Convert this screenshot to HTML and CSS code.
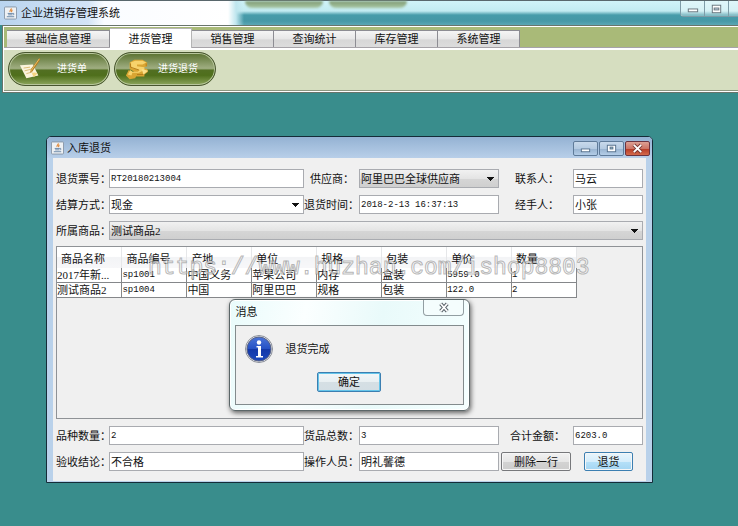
FILE: index.html
```html
<!DOCTYPE html>
<html lang="zh-CN">
<head>
<meta charset="utf-8">
<title>企业进销存管理系统</title>
<link rel="stylesheet" href="styles.css">
</head>
<body>
<svg class="defs" aria-hidden="true">
  <symbol id="java" viewBox="0 0 14 14">
    <rect x="0.5" y="0.5" width="13" height="13" rx="1" fill="#eef1f4" stroke="#8795a5"/>
    <path d="M7.600 2c1 1.300-2 2-1 3.800M9 3.600C8 4.400 8 5 8.200 6" fill="none" stroke="#e08a3c" stroke-width="1.300"/>
    <path d="M4 7.500h5.500M4.500 9h4.500M3 11h8M9.500 7.500c2-.3 1.600 1.300 0 1.600" fill="none" stroke="#6785a6"/>
  </symbol>
</svg>
<header class="titlebar">
  <svg class="java"><use href="#java"/></svg>
  <h1>企业进销存管理系统</h1>
  <span class="blob blob-a"></span><span class="blob blob-b"></span>
  <div class="sysbtns">
    <button aria-label="最小化"><svg viewBox="0 0 24 16"><rect x="7.500" y="8.500" width="10" height="3" fill="#fff" stroke="#66747c"/></svg></button>
    <button aria-label="还原"><svg viewBox="0 0 24 16"><rect x="7.500" y="4.500" width="9" height="8" fill="#fff" stroke="#66747c"/><rect x="9.500" y="7.500" width="5" height="2" fill="#cde" stroke="#66747c"/></svg></button>
    <button aria-label="关闭"></button>
  </div>
</header>
<div class="shell">
  <nav class="tabs">
    <button>基础信息管理</button><button class="on">进货管理</button><button>销售管理</button><button>查询统计</button><button>库存管理</button><button>系统管理</button>
  </nav>
  <div class="toolbar">
    <button><svg viewBox="0 0 26 24"><path d="M1 8l14-1 6 12-13 3z" fill="#fbf4dc"/><path d="M5 11l7-1M6 14l8-2M8 17l7-2" stroke="#d9b871"/><path d="M22 0l1 2-8 12-3 2 1-4z" fill="#b37a20"/><path d="M22 1l-9 13" stroke="#eec36a"/><path d="M14 17c2-2 4-1 6 0l-4 4z" fill="#f3d482"/></svg><span>进货单</span></button>
    <button><svg viewBox="0 0 26 24"><path d="M5 5l5-3h9l5 3v4l-5 2 5 1 1 3-4 3v2h-9l-1 2-6 1-4-4 3-6 4 2h2l-5-3z" fill="#d9a532"/><path d="M6 5l5-2h8l4 2-4 2h-6v2l8 1v3l-6 3H8l-1 3-4-1 3-5 2 2h6l2-2-9-2z" fill="#f7d36c"/><path d="M6 6v4l9 3M23 6v3M13 18h7" fill="none" stroke="#b27b19"/><path d="M18 12l7 2-5 4z" fill="#fbe08a"/></svg><span>进货退货</span></button>
  </div>
</div>
<main class="desktop">
  <section class="frame">
    <header class="frame-title">
      <svg class="java"><use href="#java"/></svg>
      <h2>入库退货</h2>
      <div class="frame-btns">
        <button aria-label="最小化"><svg viewBox="0 0 24 14"><rect x="7.500" y="7.500" width="9" height="3" fill="#fff" stroke="#56708c"/></svg></button>
        <button aria-label="最大化"><svg viewBox="0 0 24 14"><rect x="7.500" y="3.500" width="9" height="7" fill="#fff" stroke="#56708c"/><rect x="10.500" y="5.500" width="3" height="2" fill="#9bb" stroke="#56708c"/></svg></button>
        <button class="close" aria-label="关闭"><svg viewBox="0 0 24 14"><path d="M8 3l8 8M16 3l-8 8" stroke="#7a3a35" stroke-width="4"/><path d="M8 3l8 8M16 3l-8 8" stroke="#fff" stroke-width="2"/></svg></button>
      </div>
    </header>
    <form class="form">
      <div class="grid">
        <label for="no">退货票号：</label><input id="no" class="num" value="RT20180213004">
        <label class="in" for="sup">供应商：</label><select id="sup"><option>阿里巴巴全球供应商</option></select>
        <label class="far" for="contact">联系人：</label><input id="contact" value="马云">
        <label for="pay">结算方式：</label><select id="pay" class="white"><option>现金</option></select>
        <label for="time">退货时间：</label><input id="time" class="num" value="2018-2-13 16:37:13">
        <label class="far" for="agent">经手人：</label><input id="agent" value="小张">
        <label for="goods">所属商品：</label><select id="goods" class="wide"><option>测试商品2</option></select>
      </div>
      <div class="scroll">
        <table>
          <thead><tr><th>商品名称</th><th>商品编号</th><th>产地</th><th>单位</th><th>规格</th><th>包装</th><th>单价</th><th>数量</th></tr></thead>
          <tbody>
            <tr><td>2017年新...</td><td class="num">sp1001</td><td>中国义务</td><td>苹果公司</td><td>内存</td><td>盒装</td><td class="num">5959.0</td><td class="num">1</td></tr>
            <tr><td>测试商品2</td><td class="num">sp1004</td><td>中国</td><td>阿里巴巴</td><td>规格</td><td>包装</td><td class="num">122.0</td><td class="num">2</td></tr>
          </tbody>
        </table>
      </div>
      <div class="grid">
        <label for="kinds">品种数量：</label><input id="kinds" class="num" value="2">
        <label for="total">货品总数：</label><input id="total" class="num" value="3">
        <label class="sum" for="sum">合计金额：</label><input id="sum" class="num" value="6203.0">
        <label for="result">验收结论：</label><input id="result" value="不合格">
        <label for="oper">操作人员：</label><input id="oper" value="明礼馨德">
        <div class="actions"><button type="button" class="btn">删除一行</button><button type="button" class="btn go">退货</button></div>
      </div>
    </form>
    <div class="watermark">https://www.huzhan.com/ishop8803</div>
    <div class="dialog" role="dialog" aria-labelledby="msg">
      <header><h3 id="msg">消息</h3><button aria-label="关闭"><svg viewBox="0 0 40 16"><path d="M17 4l7 8M24 4l-7 8" stroke="#59636a" stroke-width="4"/><path d="M17 4l7 8M24 4l-7 8" stroke="#fff" stroke-width="2"/></svg></button></header>
      <div class="dialog-body">
        <div class="message">
          <svg viewBox="0 0 28 28"><defs><linearGradient id="blue" x2="0" y2="1"><stop stop-color="#4a74d8"/><stop offset=".5" stop-color="#2450c4"/><stop offset=".52" stop-color="#1338a8"/><stop offset="1" stop-color="#1c49bd"/></linearGradient></defs><circle cx="14" cy="14" r="13.500" fill="#e4e6ea" stroke="#8b8f98"/><circle cx="14" cy="14" r="12" fill="url(#blue)" stroke="#566187"/><circle cx="14" cy="7.500" r="2.200" fill="#fff"/><path d="M11.500 11h4.500v10h2v1.500h-7V21h2v-8.500h-1.500z" fill="#fff"/></svg>
          <p>退货完成</p>
        </div>
        <button class="btn ok">确定</button>
      </div>
    </div>
  </section>
</main>
</body>
</html>
```
FILE: styles.css
```css
* { box-sizing: border-box; }
body {
  margin: 0;
  min-height: 100vh;
  display: flex;
  flex-direction: column;
  background: #398d8c;
  color: #111;
  font: 11px/14px "Liberation Serif", "Noto Sans CJK SC", sans-serif;
}
button, input, select { font: inherit; color: inherit; margin: 0; }
h1, h2, h3, p { margin: 0; font-size: 11px; font-weight: normal; }
.defs { display: none; }
.java { width: 13px; height: 14px; }

.titlebar {
  position: relative;
  height: 25px;
  display: flex;
  align-items: center;
  gap: 4px;
  padding-left: 4px;
  border-top: 1px solid #59676c;
  background:
    linear-gradient(90deg, #b9d4ef, #d3e4f6 88px, #fafcff 104px, #fff 228px, #bfe6ee 236px, transparent 244px),
    linear-gradient(#d0f3f8, #c2ebf1 10px, #479caa 14px, #4698a6 20px, #5aa7b4);
}
.blob {
  position: absolute;
  top: 0;
  width: 78px;
  height: 7px;
  border-radius: 0 0 30px 30px;
  background: linear-gradient(#7f9a72, #a9c8a6);
  filter: blur(1px);
}
.blob-a { left: 245px; }
.blob-b { left: 329px; }
.sysbtns {
  display: flex;
  align-self: flex-start;
  margin-left: auto;
  height: 16px;
  border: 1px solid #7e9ca7;
  border-width: 0 0 1px 1px;
  border-radius: 0 0 0 4px;
}
.sysbtns button { width: 24px; padding: 0; border: 0; border-right: 1px solid #7e9ca7; background: #ffffff55; }
.sysbtns button:last-child { width: 9px; border: 0; }
.sysbtns svg, .frame-btns svg { display: block; width: 100%; height: 100%; }

.shell {
  border: solid #69756b;
  border-width: 1px 0 1px 1px;
  margin-left: 2px;
  padding: 1px 0 1px 1px;
  background: #fff;
}
.tabs {
  display: flex;
  align-items: flex-end;
  height: 21px;
  padding-left: 3px;
  background: #a9ba78;
  border-bottom: 1px solid #a6a3a8;
}
.tabs button {
  min-width: 82px;
  height: 17px;
  padding: 0 18px;
  line-height: 16px;
  border: 1px solid #8d8d93;
  border-width: 1px 1px 0 0;
  background: linear-gradient(#f5f5f5, #e7e7e7 50%, #d7d7d7 55%, #dcdcdc);
}
.tabs .on { position: relative; height: 20px; margin-bottom: -1px; line-height: 18px; background: #fff; border-color: #b5b5b5; }
.toolbar {
  display: flex;
  gap: 4px;
  margin-top: 2px;
  padding: 2px 4px 4px;
  background: #d6dec0;
  border-bottom: 1px solid #8c9780;
}
.toolbar button {
  display: flex;
  align-items: center;
  width: 102px;
  height: 34px;
  padding: 0 8px 0 10px;
  border: 1px solid #48562f;
  border-radius: 17px;
  box-shadow: inset 0 0 0 1px #b7c59b;
  background: linear-gradient(#59712f, #a0ae82 48%, #526f22 54%, #4f6f1c 70%, #8da65c);
  color: #fff;
  font-size: 10px;
}
.toolbar svg { width: 24px; height: 24px; }
.toolbar span { flex: 1; text-align: center; }

.desktop { flex: 1; margin-left: 2px; padding: 43px 85px 42px 44px; background: #398d8c; }
.frame {
  position: relative;
  border: 1px solid #152c38;
  border-radius: 5px 5px 0 0;
  background: #b9d1ea;
  box-shadow: inset 0 1px #dceaf8;
  padding: 0 6px 1px;
}
.frame-title { display: flex; align-items: center; gap: 3px; height: 21px; margin: 0 -6px; padding: 0 2px 0 4px; border-radius: 4px 4px 0 0; background: linear-gradient(#94b2d3, #b8cfe9); }
.frame-btns { display: flex; align-self: flex-end; gap: 1px; margin: 0 0 2px auto; }
.frame-btns button { width: 25px; height: 15px; padding: 0; border: 1px solid #5f7b99; border-radius: 2px; background: linear-gradient(#c8d9eb, #b5cbe2 50%, #98b3d0 52%, #b4cde7); }
.frame-btns .close { border-color: #6b3440; background: linear-gradient(#dda195, #cd7465 50%, #b63a25 52%, #d36a4c); }
.form { padding: 11px 3px 10px; background: #f0f0f0; }
.grid { display: grid; grid-template-columns: 53px 195fr 55px 140fr 74px 70px; gap: 7px 0; align-items: center; }
label { white-space: nowrap; }
.in { padding-left: 6px; }
.far { padding-left: 16px; }
.sum { padding-left: 11px; }
input, select {
  width: 100%;
  min-width: 0;
  height: 19px;
  padding: 0 1px 2px;
  border: 1px solid #a9abb0;
  border-radius: 0;
  background: #fff;
}
.num { font-family: "Liberation Mono", monospace; font-size: 9px; }
input.num { padding-bottom: 0; }
select {
  padding-bottom: 0;
  appearance: none;
  background:
    linear-gradient(90deg, #111, #111) right 4px top 7px / 7px 1px no-repeat,
    linear-gradient(90deg, #111, #111) right 5px top 8px / 5px 1px no-repeat,
    linear-gradient(90deg, #111, #111) right 6px top 9px / 3px 1px no-repeat,
    linear-gradient(90deg, #111, #111) right 7px top 10px / 1px 1px no-repeat,
    linear-gradient(#f1f1f1, #e4e4e4 50%, #d5d5d5 55%, #cfcfcf);
}
select.white { background-color: #fff; background-size: 7px 1px, 5px 1px, 3px 1px, 1px 1px, 0 0; background-repeat: no-repeat; }
.wide { grid-column: 2 / -1; }
.scroll { height: 173px; margin: 6px 0 7px; border: 1px solid #8f9296; }
table { width: 520px; table-layout: fixed; border-collapse: collapse; }
th, td { padding: 0; text-align: left; font-weight: normal; white-space: nowrap; overflow: hidden; }
th { height: 21px; padding: 3px 0 0 4px; background: linear-gradient(#fff, #fff 45%, #f3f4f6 50%, #f7f7f9); border-right: 1px solid #e6e7e9; }
td { height: 14px; padding-top: 1px; line-height: 13px; background: #fff; border: solid #85878a; border-width: 0 1px 1px 0; }
.actions { grid-column: 5 / -1; display: flex; justify-content: space-between; padding: 0 10px 0 2px; }
.btn {
  width: 70px;
  height: 19px;
  padding: 0;
  line-height: 16px;
  border: 1px solid #77787b;
  border-radius: 2px;
  box-shadow: inset 0 0 0 1px #f6f6f6;
  background: linear-gradient(#f1f1f1, #e6e6e6 50%, #d3d3d3 52%, #cdcdcd);
}
.go { width: 49px; border-color: #3c7fb1; background: linear-gradient(#e8f5fc, #d5edfb 50%, #b5e0f8 52%, #a3d5f2); }

.watermark {
  position: absolute;
  left: 101px;
  top: 117px;
  color: #ffffff99;
  font: 23px/28px "Liberation Mono", monospace;
  -webkit-text-stroke: 1px #8889;
  pointer-events: none;
}
.dialog {
  position: absolute;
  left: 50%;
  top: 162px;
  width: 241px;
  margin-left: -121px;
  padding: 0 5px 5px;
  border: 1px solid #5b6668;
  border-radius: 6px;
  background: linear-gradient(100deg, #e9fbfb, #fbffff 30%, #e9fafa 60%, #f5ffff);
  box-shadow: 1px 2px 5px #0009, inset 0 0 0 1px #fff;
}
.dialog header { display: flex; align-items: flex-start; justify-content: space-between; height: 25px; }
.dialog h3 { padding: 5px 0 0 1px; }
.dialog header button { width: 41px; height: 16px; padding: 0; border: 1px solid #929ea2; border-top: 0; border-radius: 0 0 4px 4px; background: #f4fdfd; }
.dialog header svg { display: block; width: 100%; height: 100%; }
.dialog-body { padding: 9px 9px 12px; border: 1px solid #838b8d; background: #f0f0f0; text-align: center; }
.message { display: flex; align-items: center; gap: 13px; margin-bottom: 9px; }
.message svg { width: 28px; height: 28px; }
.ok { width: 64px; height: 20px; border-color: #3c7fb1; box-shadow: inset 0 0 0 1px #65c5ea; background: linear-gradient(#f3f6f8, #e8eff2 50%, #d5dfe4 52%, #d3dee4); }
```
